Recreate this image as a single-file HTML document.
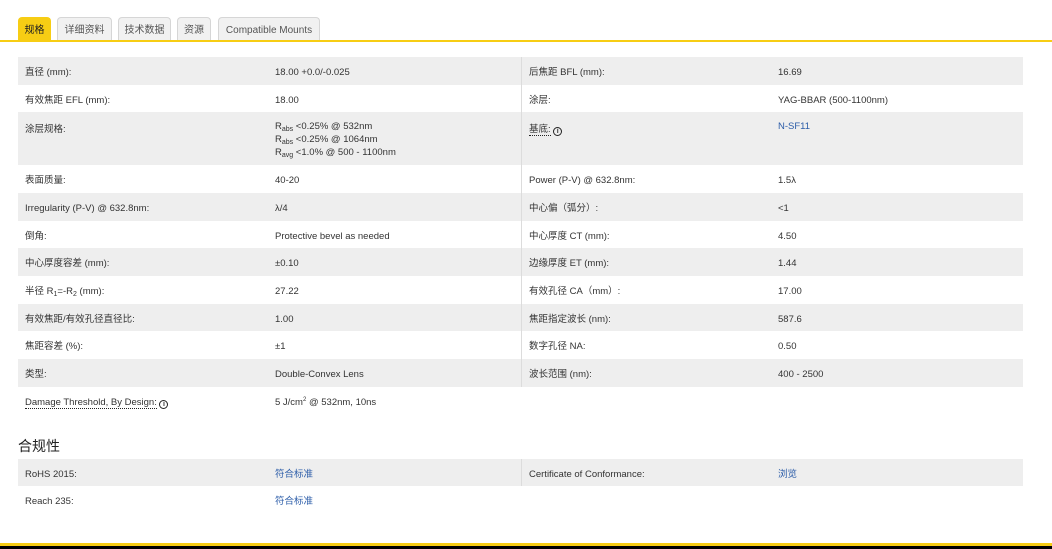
<!DOCTYPE html>
<html><head><meta charset="utf-8"><style>
*{margin:0;padding:0;box-sizing:border-box}
body{width:1052px;height:549px;background:#fff;font-family:"Liberation Sans","Noto Sans CJK SC",sans-serif;color:#333;position:relative;overflow:hidden;font-size:9.5px}
.tab{position:absolute;top:17px;height:24px;border:1px solid #d6d6d6;border-bottom:none;background:#f1f1f1;border-radius:4px 4px 0 0;font-size:10px;color:#555;text-align:center;line-height:25px}
.tab.a{background:#f7cd14;border-color:#f7cd14;color:#222}
.line{position:absolute;top:40px;left:0;width:1052px;height:2px;background:#f7cd14}
.row{position:absolute;left:18px;width:1005px}
.g{background:#eeeeee}
.c{position:absolute;top:2px;white-space:nowrap}
.div{position:absolute;left:503px;top:0;bottom:0;width:1px;background:#dcdcdc}
a{color:#2b5ca8;text-decoration:none}
sub{font-size:7px;vertical-align:-2px;line-height:0}
sup{font-size:6px;vertical-align:4px;line-height:0}
.i{display:inline-block;width:9px;height:9px;border:1.3px solid #222;border-radius:50%;font-size:7px;line-height:7px;text-align:center;font-weight:bold;vertical-align:-1px}
.u{border-bottom:1px dotted #222}
</style></head><body>
<div class="tab a" style="left:18px;width:33px">规格</div>
<div class="tab" style="left:57px;width:55px">详细资料</div>
<div class="tab" style="left:118px;width:53px">技术数据</div>
<div class="tab" style="left:177px;width:34px">资源</div>
<div class="tab" style="left:218px;width:102px">Compatible Mounts</div>
<div class="line"></div>

<div class="row g" style="top:57px;height:28px;line-height:28px"><div class="div"></div><span class="c" style="left:7px">直径 (mm):</span><span class="c" style="left:257px">18.00 +0.0/-0.025</span><span class="c" style="left:511px">后焦距 BFL (mm):</span><span class="c" style="left:760px">16.69</span></div>
<div class="row" style="top:85px;height:27px;line-height:27px"><div class="div"></div><span class="c" style="left:7px">有效焦距 EFL (mm):</span><span class="c" style="left:257px">18.00</span><span class="c" style="left:511px">涂层:</span><span class="c" style="left:760px">YAG-BBAR (500-1100nm)</span></div>
<div class="row g" style="top:112px;height:53px"><div class="div"></div><span class="c" style="left:7px;top:9px">涂层规格:</span><span class="c" style="left:257px;top:8px;line-height:13px">R<sub>abs</sub> &lt;0.25% @ 532nm<br>R<sub>abs</sub> &lt;0.25% @ 1064nm<br>R<sub>avg</sub> &lt;1.0% @ 500 - 1100nm</span><span class="c" style="left:511px;top:9px"><span class="u">基底:</span> <span class="i">i</span></span><span class="c" style="left:760px;top:9px"><a>N-SF11</a></span></div>
<div class="row" style="top:165px;height:28px;line-height:28px"><div class="div"></div><span class="c" style="left:7px">表面质量:</span><span class="c" style="left:257px">40-20</span><span class="c" style="left:511px">Power (P-V) @ 632.8nm:</span><span class="c" style="left:760px">1.5λ</span></div>
<div class="row g" style="top:193px;height:28px;line-height:28px"><div class="div"></div><span class="c" style="left:7px">Irregularity (P-V) @ 632.8nm:</span><span class="c" style="left:257px">λ/4</span><span class="c" style="left:511px">中心偏（弧分）:</span><span class="c" style="left:760px">&lt;1</span></div>
<div class="row" style="top:221px;height:27px;line-height:27px"><div class="div"></div><span class="c" style="left:7px">倒角:</span><span class="c" style="left:257px">Protective bevel as needed</span><span class="c" style="left:511px">中心厚度 CT (mm):</span><span class="c" style="left:760px">4.50</span></div>
<div class="row g" style="top:248px;height:28px;line-height:28px"><div class="div"></div><span class="c" style="left:7px">中心厚度容差 (mm):</span><span class="c" style="left:257px">±0.10</span><span class="c" style="left:511px">边缘厚度 ET (mm):</span><span class="c" style="left:760px">1.44</span></div>
<div class="row" style="top:276px;height:28px;line-height:28px"><div class="div"></div><span class="c" style="left:7px">半径 R<sub>1</sub>=-R<sub>2</sub> (mm):</span><span class="c" style="left:257px">27.22</span><span class="c" style="left:511px">有效孔径 CA（mm）:</span><span class="c" style="left:760px">17.00</span></div>
<div class="row g" style="top:304px;height:27px;line-height:27px"><div class="div"></div><span class="c" style="left:7px">有效焦距/有效孔径直径比:</span><span class="c" style="left:257px">1.00</span><span class="c" style="left:511px">焦距指定波长 (nm):</span><span class="c" style="left:760px">587.6</span></div>
<div class="row" style="top:331px;height:28px;line-height:28px"><div class="div"></div><span class="c" style="left:7px">焦距容差 (%):</span><span class="c" style="left:257px">±1</span><span class="c" style="left:511px">数字孔径 NA:</span><span class="c" style="left:760px">0.50</span></div>
<div class="row g" style="top:359px;height:28px;line-height:28px"><div class="div"></div><span class="c" style="left:7px">类型:</span><span class="c" style="left:257px">Double-Convex Lens</span><span class="c" style="left:511px">波长范围 (nm):</span><span class="c" style="left:760px">400 - 2500</span></div>
<div class="row" style="top:387px;height:28px;line-height:28px"><span class="c" style="left:7px"><span class="u">Damage Threshold, By Design:</span> <span class="i">i</span></span><span class="c" style="left:257px">5 J/cm<sup>2</sup> @ 532nm, 10ns</span></div>

<div style="position:absolute;left:18px;top:436px;font-size:14px;color:#222">合规性</div>
<div class="row g" style="top:459px;height:27px;line-height:27px"><div class="div"></div><span class="c" style="left:7px">RoHS 2015:</span><span class="c" style="left:257px"><a>符合标准</a></span><span class="c" style="left:511px">Certificate of Conformance:</span><span class="c" style="left:760px"><a>浏览</a></span></div>
<div class="row" style="top:486px;height:28px;line-height:28px"><span class="c" style="left:7px">Reach 235:</span><span class="c" style="left:257px"><a>符合标准</a></span></div>

<div style="position:absolute;left:0;top:543px;width:1052px;height:3px;background:#f7cd14"></div>
<div style="position:absolute;left:0;top:546px;width:1052px;height:3px;background:#000"></div>
</body></html>
